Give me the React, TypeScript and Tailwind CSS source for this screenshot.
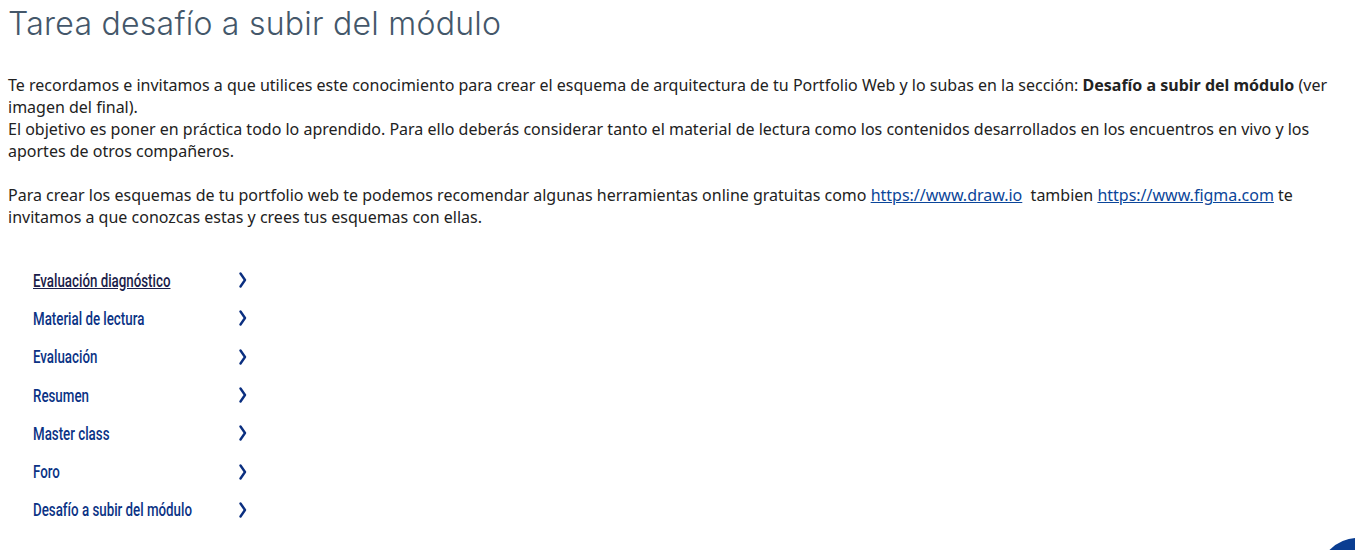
import React from 'react';

const items = [
  'Evaluación diagnóstico',
  'Material de lectura',
  'Evaluación',
  'Resumen',
  'Master class',
  'Foro',
  'Desafío a subir del módulo',
];

function Chevron() {
  return (
    <svg width="8" height="16" viewBox="0 0 8 16" className="shrink-0">
      <path d="M1.5 1.5 L6 8 L1.5 14.5" fill="none" stroke="#0b2f80" strokeWidth="2.4" strokeLinecap="round" strokeLinejoin="round" />
    </svg>
  );
}

export default function App() {
  return (
    <div className="relative w-[1355px] h-[550px] overflow-hidden bg-white">
      <div className="pl-2 pr-6">
        <h1 className="pt-[4px] text-[32px] leading-[40px] tracking-[0.25px] text-[#44576a] font-[Inter,'Noto_Sans',sans-serif] font-light">
          Tarea desafío a subir del módulo
        </h1>

        <div className="mt-[30px] text-[16px] leading-[22px] text-[#222] font-['Noto_Sans',sans-serif]">
          <p>
            Te recordamos e invitamos a que utilices este conocimiento para crear el esquema de arquitectura de tu Portfolio Web y lo subas en la sección: <strong>Desafío a subir del módulo</strong> (ver imagen del final).
          </p>
          <p>
            El objetivo es poner en práctica todo lo aprendido. Para ello deberás considerar tanto el material de lectura como los contenidos desarrollados en los encuentros en vivo y los aportes de otros compañeros.
          </p>
          <p className="mt-[22px]">
            Para crear los esquemas de tu portfolio web te podemos recomendar algunas herramientas online gratuitas como{' '}
            <a className="text-[#0b4599] underline">https://www.draw.io</a>&nbsp; tambien{' '}
            <a className="text-[#0b4599] underline">https://www.figma.com</a> te invitamos a que conozcas estas y crees tus esquemas con ellas.
          </p>
        </div>

        <ul className="mt-[33px] ml-[25px] w-[214px] flex flex-col font-['Roboto',sans-serif] text-[18px] font-medium">
          {items.map((t, i) => (
            <li key={t} className="h-[38.3px] flex items-center">
              <div className="flex-1 min-w-0">
                <span
                  className={
                    'inline-block origin-left [transform:scaleX(0.74)] whitespace-nowrap ' +
                    (i === 0 ? 'text-[#1b1d4a] underline' : 'text-[#0b3385]')
                  }
                >
                  {t}
                </span>
              </div>
              <Chevron />
            </li>
          ))}
        </ul>
      </div>

      <div className="absolute left-[1318px] top-[538px] w-[80px] h-[80px] rounded-full bg-[#0a3d91]" />
    </div>
  );
}
